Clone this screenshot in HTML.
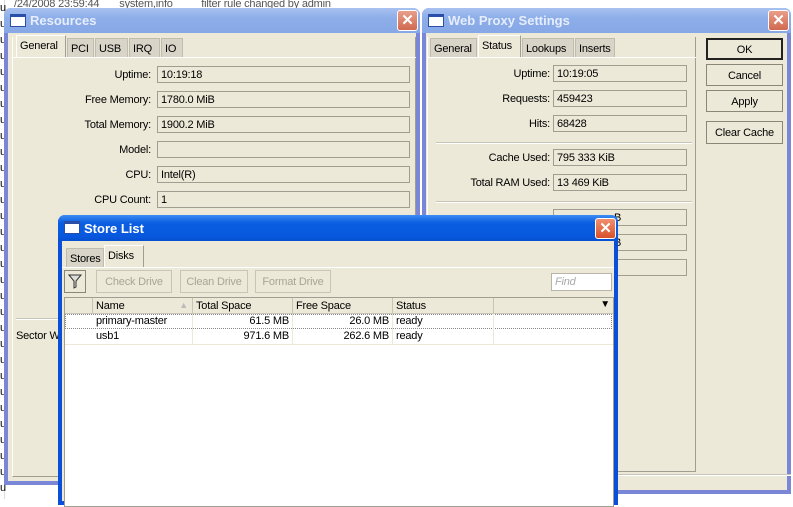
<!DOCTYPE html>
<html><head><meta charset="utf-8"><style>
*{box-sizing:border-box;margin:0;padding:0}
body{width:793px;height:499px;overflow:hidden;background:#fff;position:relative;font-family:"Liberation Sans",Arial,sans-serif;font-size:11px;color:#000;letter-spacing:-0.2px}
.a{position:absolute}
.win{position:absolute;background:#ece9d8;border:4px solid #7a86d6;border-top:none;border-radius:7px 7px 0 0}
.tb{position:absolute;left:-4px;right:-4px;top:0;height:25px;border-radius:7px 7px 0 0;background:linear-gradient(#a8c1f0,#8daee9 40%,#87a8e6);color:#e6edfb;font-weight:bold;font-size:13px;padding:5px 0 0 26px;letter-spacing:0}
.act{border-color:#0a4fd8}
.act .tb{background:linear-gradient(#3d8cf5,#0a5ee0 30%,#0858de 80%,#0650d0);color:#fff}
.ico{position:absolute;left:6px;top:6px;width:16px;height:13px;background:#fff;border:1px solid #2a4fa8;border-top:3px solid #2a4fa8}
.x{position:absolute;right:2px;top:2px;width:21px;height:21px;border:1px solid #fff;border-radius:3px;background:linear-gradient(#e99e8a,#d06a50);color:#fff;font-size:15px;font-weight:bold;text-align:center;line-height:19px}
.act .x{background:linear-gradient(#f09070,#d8502a)}
.tab{position:absolute;height:20px;border:1px solid #c0bdae;border-bottom:none;background:#d8d5c8;padding:4px 3px 0;font-size:11px;white-space:nowrap;overflow:hidden}
.tab.on{background:#ece9d8;border-color:#fff #a09e90 transparent #fff;height:23px;top:-2px;padding-top:4px}
.lbl{position:absolute;text-align:right;font-size:11px;white-space:nowrap}
.fld{position:absolute;height:17px;border:1px solid #a09e90;background:#ece9d8;padding:2px 3px;font-size:11px;white-space:nowrap;overflow:hidden}
.btn{position:absolute;border:1px solid #8a877a;background:#ece9d8;text-align:center;font-size:11px;padding-top:5px;white-space:nowrap}
.sep{position:absolute;height:2px;border-top:1px solid #c8c5b6;border-bottom:1px solid #fff}
.th{position:absolute;top:0;height:16px;border-right:1px solid #c8c5b6;padding:2px 3px;font-size:11px}
.cell{position:absolute;height:15px;border-right:1px solid #ece9d8;padding:1px 3px;font-size:11px}
</style></head><body>
<div class="a" style="left:0;top:0;width:5px;height:499px;border-right:1px solid #ddd;font-size:11px;line-height:16px;color:#000">u u u u u u u u u u u u u u u u u u u u u u u u u u u u u u u</div>
<div class="a" style="left:14px;top:0;font-size:11px;color:#555;line-height:8px">/24/2008 23:59:44 &nbsp; &nbsp; &nbsp; system,info &nbsp; &nbsp; &nbsp; &nbsp; &nbsp;filter rule changed by admin</div>

<!-- Resources -->
<div class="win" style="left:4px;top:8px;width:416px;height:477px">
<div class="tb"><div class="ico"></div>Resources<div class="x">✕</div></div>
<div class="a" style="left:4px;top:29px;width:404px;height:440px;border:1px solid #fff;border-right-color:#a09e90;border-bottom-color:#a09e90;border-top:none">
<div class="tab on" style="left:3px;top:-2px;width:50px">General</div>
<div class="tab" style="left:54px;top:1px;width:27px">PCI</div>
<div class="tab" style="left:82px;top:1px;width:33px">USB</div>
<div class="tab" style="left:116px;top:1px;width:31px">IRQ</div>
<div class="tab" style="left:148px;top:1px;width:22px">IO</div>
<div class="a" style="left:0;top:20px;width:403px;border-top:1px solid #fff"></div>
</div>
<div class="lbl" style="left:0;top:61px;width:143px">Uptime:</div><div class="fld" style="left:149px;top:58px;width:253px">10:19:18</div>
<div class="lbl" style="left:0;top:86px;width:143px">Free Memory:</div><div class="fld" style="left:149px;top:83px;width:253px">1780.0 MiB</div>
<div class="lbl" style="left:0;top:111px;width:143px">Total Memory:</div><div class="fld" style="left:149px;top:108px;width:253px">1900.2 MiB</div>
<div class="lbl" style="left:0;top:136px;width:143px">Model:</div><div class="fld" style="left:149px;top:133px;width:253px"></div>
<div class="lbl" style="left:0;top:161px;width:143px">CPU:</div><div class="fld" style="left:149px;top:158px;width:253px">Intel(R)</div>
<div class="lbl" style="left:0;top:186px;width:143px">CPU Count:</div><div class="fld" style="left:149px;top:183px;width:253px">1</div>
<div class="sep" style="left:8px;top:310px;width:400px"></div>
<div class="lbl" style="left:8px;top:322px;text-align:left">Sector W</div>
</div>

<!-- Web Proxy -->
<div class="win" style="left:422px;top:8px;width:369px;height:486px">
<div class="tb"><div class="ico"></div>Web Proxy Settings<div class="x">✕</div></div>
<div class="a" style="left:1px;top:29px;width:269px;height:435px;border:1px solid #fff;border-right-color:#a09e90;border-bottom-color:#a09e90;border-top:none">
<div class="tab" style="left:2px;top:1px;width:47px">General</div>
<div class="tab on" style="left:50px;top:-2px;width:43px">Status</div>
<div class="tab" style="left:94px;top:1px;width:52px">Lookups</div>
<div class="tab" style="left:147px;top:1px;width:40px">Inserts</div>
<div class="a" style="left:0;top:20px;width:268px;border-top:1px solid #fff"></div>
</div>
<div class="lbl" style="left:0;top:60px;width:124px">Uptime:</div><div class="fld" style="left:127px;top:57px;width:134px">10:19:05</div>
<div class="lbl" style="left:0;top:85px;width:124px">Requests:</div><div class="fld" style="left:127px;top:82px;width:134px">459423</div>
<div class="lbl" style="left:0;top:110px;width:124px">Hits:</div><div class="fld" style="left:127px;top:107px;width:134px">68428</div>
<div class="sep" style="left:10px;top:134px;width:256px"></div>
<div class="lbl" style="left:0;top:144px;width:124px">Cache Used:</div><div class="fld" style="left:127px;top:141px;width:134px">795 333 KiB</div>
<div class="lbl" style="left:0;top:169px;width:124px">Total RAM Used:</div><div class="fld" style="left:127px;top:166px;width:134px">13 469 KiB</div>
<div class="sep" style="left:10px;top:193px;width:256px"></div>
<div class="fld" style="left:127px;top:201px;width:134px"><span class="a" style="left:60px;top:2px">B</span></div>
<div class="fld" style="left:127px;top:226px;width:134px"><span class="a" style="left:60px;top:2px">B</span></div>
<div class="fld" style="left:127px;top:251px;width:134px"></div>
<div class="btn" style="left:280px;top:30px;width:77px;height:22px;border:2px solid #222;padding-top:4px">OK</div>
<div class="btn" style="left:280px;top:56px;width:77px;height:22px">Cancel</div>
<div class="btn" style="left:280px;top:82px;width:77px;height:22px">Apply</div>
<div class="btn" style="left:280px;top:113px;width:77px;height:23px">Clear Cache</div>
<div class="sep" style="left:0;top:466px;width:365px"></div>
</div>

<!-- Store List -->
<div class="win act" style="left:58px;top:215px;width:560px;height:290px;border-width:4px">
<div class="tb" style="height:26px;padding-top:6px;font-size:13px"><div class="ico"></div>Store List<div class="x" style="top:3px">✕</div></div>
<div class="tab" style="left:4px;top:33px;width:38px;height:20px">Stores</div>
<div class="tab on" style="left:42px;top:30px;width:40px;height:23px">Disks</div>
<div class="a" style="left:0;top:52px;width:552px;border-top:1px solid #fff"></div>
<div class="btn" style="left:2px;top:55px;width:22px;height:23px;padding:2px 0 0 0">
<svg width="14" height="16" viewBox="0 0 14 16"><path d="M1 2h12L8 8v6L6 15V8z" fill="#ddd" stroke="#333"/></svg></div>
<div class="btn" style="left:34px;top:55px;width:76px;height:23px;color:#a8a595;border-color:#c8c5b6">Check Drive</div>
<div class="btn" style="left:118px;top:55px;width:68px;height:23px;color:#a8a595;border-color:#c8c5b6">Clean Drive</div>
<div class="btn" style="left:193px;top:55px;width:76px;height:23px;color:#a8a595;border-color:#c8c5b6">Format Drive</div>
<div class="fld" style="left:489px;top:58px;width:61px;height:18px;background:#fff;color:#aaa;font-style:italic;border-color:#b8b5a8">Find</div>
<div class="a" style="left:2px;top:82px;width:550px;height:210px;background:#fff;border:1px solid #a09e90">
<div class="a" style="left:0;top:0;width:548px;height:16px;background:#ece9d8;border-bottom:1px solid #c8c5b6">
<div class="th" style="left:0;width:28px"></div>
<div class="th" style="left:28px;width:100px">Name<span style="position:absolute;right:4px;color:#bbb;font-size:9px">▲</span></div>
<div class="th" style="left:128px;width:100px">Total Space</div>
<div class="th" style="left:228px;width:100px">Free Space</div>
<div class="th" style="left:328px;width:101px">Status</div>
<div class="a" style="right:3px;top:1px;font-size:10px">▼</div>
</div>
<div class="a" style="left:0;top:16px;width:547px;height:15px;border:1px dotted #888"></div>
<div class="cell" style="left:28px;top:16px;width:100px">primary-master</div>
<div class="cell" style="left:128px;top:16px;width:100px;text-align:right">61.5 MB</div>
<div class="cell" style="left:228px;top:16px;width:100px;text-align:right">26.0 MB</div>
<div class="cell" style="left:328px;top:16px;width:101px">ready</div>
<div class="cell" style="left:28px;top:31px;width:100px">usb1</div>
<div class="cell" style="left:128px;top:31px;width:100px;text-align:right">971.6 MB</div>
<div class="cell" style="left:228px;top:31px;width:100px;text-align:right">262.6 MB</div>
<div class="cell" style="left:328px;top:31px;width:101px">ready</div>
<div class="a" style="left:0;top:46px;width:548px;border-top:1px solid #ece9d8"></div>
</div>
</div>
</body></html>
